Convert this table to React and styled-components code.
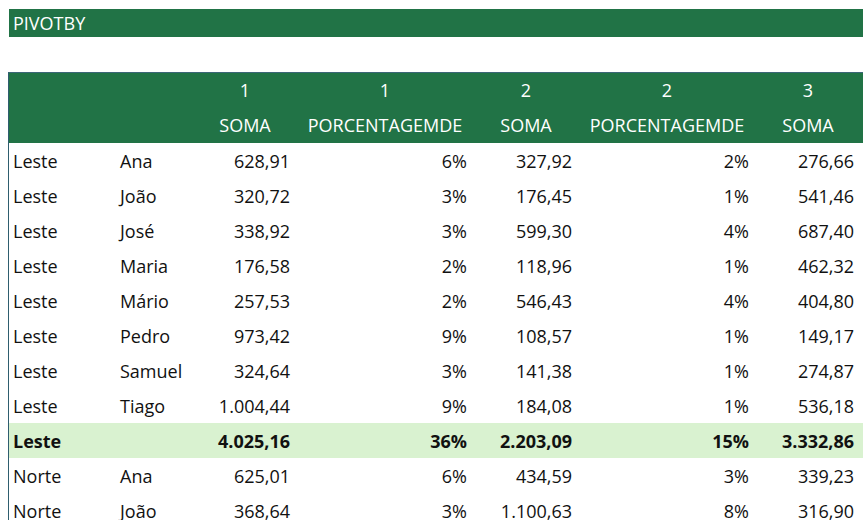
import React from "react";
import styled, { createGlobalStyle } from "styled-components";

const GlobalStyle = createGlobalStyle`
  html, body {
    margin: 0;
    padding: 0;
    background: #ffffff;
  }
  body {
    font-family: "Open Sans", "Noto Sans", sans-serif;
    overflow: hidden;
  }
`;

const green = "#217346";

const columns = [
  { label: "1", sub: "SOMA" },
  { label: "1", sub: "PORCENTAGEMDE" },
  { label: "2", sub: "SOMA" },
  { label: "2", sub: "PORCENTAGEMDE" },
  { label: "3", sub: "SOMA" },
];

const rows = [
  ["Leste", "Ana", "628,91", "6%", "327,92", "2%", "276,66"],
  ["Leste", "João", "320,72", "3%", "176,45", "1%", "541,46"],
  ["Leste", "José", "338,92", "3%", "599,30", "4%", "687,40"],
  ["Leste", "Maria", "176,58", "2%", "118,96", "1%", "462,32"],
  ["Leste", "Mário", "257,53", "2%", "546,43", "4%", "404,80"],
  ["Leste", "Pedro", "973,42", "9%", "108,57", "1%", "149,17"],
  ["Leste", "Samuel", "324,64", "3%", "141,38", "1%", "274,87"],
  ["Leste", "Tiago", "1.004,44", "9%", "184,08", "1%", "536,18"],
  ["Leste", "", "4.025,16", "36%", "2.203,09", "15%", "3.332,86", true],
  ["Norte", "Ana", "625,01", "6%", "434,59", "3%", "339,23"],
  ["Norte", "João", "368,64", "3%", "1.100,63", "8%", "316,90"],
];

export default function App() {
  return (
    <>
      <GlobalStyle />
      <Page>
        <TitleBar>PIVOTBY</TitleBar>
        <Table>
          <HeadRow $shift={2}>
            <Cell />
            <Cell />
            {columns.map((c, i) => (
              <HeadCell key={i}>{c.label}</HeadCell>
            ))}
          </HeadRow>
          <HeadRow $shift={1}>
            <Cell />
            <Cell />
            {columns.map((c, i) => (
              <HeadCell key={i}>{c.sub}</HeadCell>
            ))}
          </HeadRow>
          {rows.map((r, i) => {
            const total = r[7] === true;
            return (
              <Row key={i} $total={total}>
                <Cell $pad={4}>{r[0]}</Cell>
                <Cell $pad={5}>{r[1]}</Cell>
                <Num>{r[2]}</Num>
                <Num $pad={8}>{r[3]}</Num>
                <Num>{r[4]}</Num>
                <Num $pad={8}>{r[5]}</Num>
                <Num>{r[6]}</Num>
              </Row>
            );
          })}
        </Table>
      </Page>
    </>
  );
}

const Page = styled.div`
  padding: 9px 0 0 9px;
`;

const TitleBar = styled.div`
  height: 28px;
  background: ${green};
  color: #ffffff;
  font-size: 18px;
  line-height: 28px;
  padding-left: 4px;
`;

const Table = styled.div`
  margin-top: 35px;
  border-top: 1px solid #3c6678;
  border-left: 1px solid #2e5d6e;
  margin-left: -1px;
`;

const Row = styled.div`
  display: grid;
  grid-template-columns: 106px 80px 100px 180px 102px 180px 102px 1fr;
  height: 35px;
  align-items: center;
  font-size: 18px;
  color: #111111;
  background: ${(p) => (p.$total ? "#d9f2d0" : "#ffffff")};
  font-weight: ${(p) => (p.$total ? 700 : 400)};
`;

const HeadRow = styled(Row)`
  background: ${green};
  color: #ffffff;
  box-sizing: border-box;
  padding-bottom: ${(p) => p.$shift || 0}px;
`;

const Cell = styled.div`
  padding-left: ${(p) => p.$pad || 0}px;
  white-space: nowrap;
`;

const HeadCell = styled.div`
  text-align: center;
  white-space: nowrap;
`;

const Num = styled.div`
  text-align: right;
  padding-right: ${(p) => p.$pad || 5}px;
  white-space: nowrap;
`;
